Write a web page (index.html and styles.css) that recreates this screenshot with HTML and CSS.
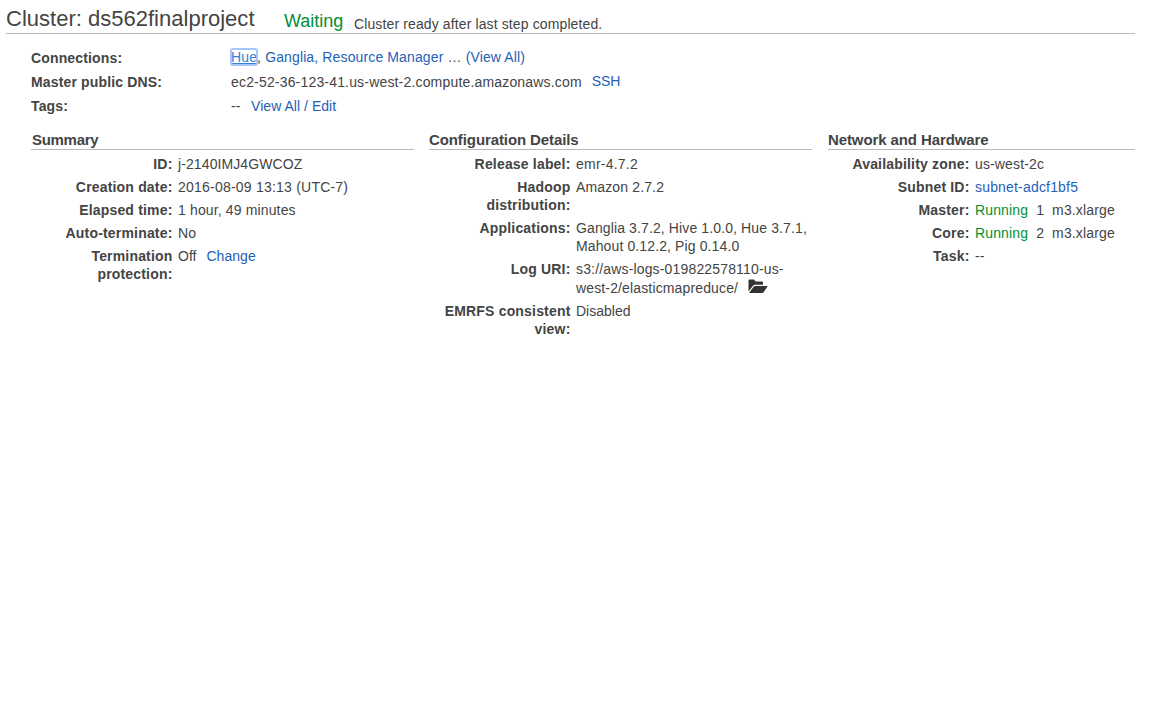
FILE: index.html
```html
<!DOCTYPE html>
<html lang="en">
<head>
<meta charset="utf-8">
<title>Cluster: ds562finalproject</title>
<link rel="stylesheet" href="styles.css">
</head>
<body>
<header class="header">
  <h1 class="title">Cluster: ds562finalproject</h1>
  <span class="status">Waiting</span>
  <span class="reason">Cluster ready after last step completed.</span>
</header>
<section class="overview">
  <div class="line"><b class="name">Connections:</b><span class="connections"><a class="focused">Hue</a>, <a>Ganglia,</a> <a>Resource Manager</a> … <a>(View All)</a></span></div>
  <div class="line"><b class="name">Master public DNS:</b><span class="dns">ec2-52-36-123-41.us-west-2.compute.amazonaws.com</span><a class="ssh">SSH</a></div>
  <div class="line"><b class="name">Tags:</b><span>--</span><a class="edit">View All / Edit</a></div>
</section>
<main class="columns">
  <section class="summary">
    <h2>Summary</h2>
    <dl>
      <dt>ID:</dt><dd class="id">j-2140IMJ4GWCOZ</dd>
      <dt>Creation date:</dt><dd class="date">2016-08-09 13:13 (UTC-7)</dd>
      <dt>Elapsed time:</dt><dd>1 hour, 49 minutes</dd>
      <dt>Auto-terminate:</dt><dd>No</dd>
      <dt>Termination<br>protection:</dt><dd class="plain">Off<a class="change">Change</a></dd>
    </dl>
  </section>
  <section class="config">
    <h2>Configuration Details</h2>
    <dl>
      <dt>Release label:</dt><dd class="date">emr-4.7.2</dd>
      <dt>Hadoop<br>distribution:</dt><dd>Amazon 2.7.2</dd>
      <dt>Applications:</dt><dd class="apps">Ganglia 3.7.2, Hive 1.0.0, Hue 3.7.1,<br>Mahout 0.12.2, Pig 0.14.0</dd>
      <dt>Log URI:</dt><dd class="log">s3://aws-logs-019822578110-us-<br><span class="path">west-2/elasticmapreduce/<svg class="folder" width="20" height="15" viewBox="0 0 20 15"><path d="M.5 12.500V1.500Q.5.500 1.500.500H6L7.500 2.500H14Q15 2.500 15 3.500V5.700H7Q5.800 5.700 5 6.700Z"/><path d="M7 7H19.800L15.800 13Q15.200 14 14 14H1.500Q1 14 1.500 13.200L5.500 8Q6.200 7 7 7Z"/></svg></span></dd>
      <dt>EMRFS consistent<br>view:</dt><dd class="plain">Disabled</dd>
    </dl>
  </section>
  <section class="network">
    <h2>Network and Hardware</h2>
    <dl>
      <dt>Availability zone:</dt><dd>us-west-2c</dd>
      <dt>Subnet ID:</dt><dd><a class="subnet">subnet-adcf1bf5</a></dd>
      <dt>Master:</dt><dd class="nodes"><span class="running">Running</span><span>1</span><span>m3.xlarge</span></dd>
      <dt>Core:</dt><dd class="nodes"><span class="running">Running</span><span>2</span><span>m3.xlarge</span></dd>
      <dt>Task:</dt><dd>--</dd>
    </dl>
  </section>
</main>
</body>
</html>
```

FILE: styles.css
```css
* { box-sizing: border-box; }
body { margin: 0; background: #fff; color: #444; font: 14px/18px "Liberation Sans", Arial, sans-serif; letter-spacing: .14px; }
a { color: #1f61b7; text-decoration: none; }
.header { display: flex; align-items: flex-start; height: 34px; margin: 0 17px 0 6px; padding-top: 5px; border-bottom: 1px solid #bbb; white-space: nowrap; }
.title { margin: 0; width: 278px; font-size: 22px; line-height: 28px; font-weight: 400; letter-spacing: .01px; }
.status { width: 70px; padding-top: 2px; color: #009035; font-size: 18px; line-height: 28px; letter-spacing: 0; }
.reason { padding-top: 5px; line-height: 28px; letter-spacing: .12px; }
.overview { padding: 12px 0 0 31px; }
.line { display: flex; height: 24px; line-height: 24px; white-space: nowrap; }
.name { width: 200px; letter-spacing: .15px; }
.connections { margin-top: -1px; letter-spacing: .13px; }
.dns { letter-spacing: .175px; }
.focused { outline: 2px solid #a4c6fb; outline-offset: -1px; border-radius: 2px; color: #397ed8; text-decoration: underline; }
.ssh, .edit, .change { margin-left: 10px; }
.ssh { margin-top: -1px; letter-spacing: -.1px; }
.edit { margin-left: 10.5px; letter-spacing: .03px; }
.change { letter-spacing: .05px; }
.columns { display: grid; grid-template-columns: 383px 383px 307px; column-gap: 15px; padding: 13px 0 0 31px; }
.network { margin: 0 -1px 0 1px; }
h2 { margin: 0; height: 19px; font-size: 15px; line-height: 18px; letter-spacing: -.1px; border-bottom: 1px solid #bbb; }
.summary h2 { padding-left: 1px; letter-spacing: -.3px; }
dl { display: grid; margin: 5px 0 0; row-gap: 5px; column-gap: 5.5px; grid-template-columns: 141.5px 1fr; white-space: nowrap; }
dt { font-weight: 700; text-align: right; letter-spacing: .18px; }
dd { margin: 0; }
.id { letter-spacing: .1px; }
.date { letter-spacing: .22px; }
.subnet { letter-spacing: .18px; }
.apps { letter-spacing: .12px; }
.log { letter-spacing: .16px; }
.plain { letter-spacing: 0; }
.path { display: flex; height: 19px; line-height: 20px; letter-spacing: .14px; }
.folder { margin: 1px 0 0 10px; fill: #333; }
.nodes { display: flex; gap: 8px; }
.running { color: #009035; }
```
